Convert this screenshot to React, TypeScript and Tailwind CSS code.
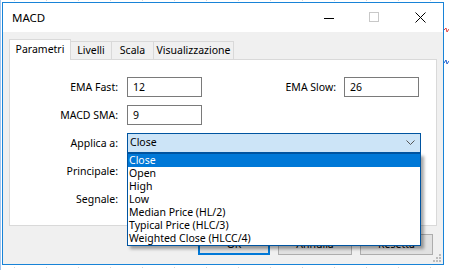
import React from "react";

const font = { fontFamily: '"Noto Sans", "Open Sans", sans-serif' };

const tabs = [
  { name: "Parametri", w: "w-[62px]", active: true },
  { name: "Livelli", w: "w-[41px]", active: false },
  { name: "Scala", w: "w-[42px]", active: false },
  { name: "Visualizzazione", w: "w-[80px]", active: false },
];

const options = [
  "Close",
  "Open",
  "High",
  "Low",
  "Median Price (HL/2)",
  "Typical Price (HLC/3)",
  "Weighted Close (HLCC/4)",
];

const Label = ({ text }: { text: string }) => (
  <div className="w-[108px] shrink-0 pr-[1px] text-right leading-[20px]">{text}</div>
);

const Input = ({ value }: { value: string }) => (
  <div className="ml-[8px] h-[20px] w-[75px] border border-[#7a7a7a] bg-white pl-[5px] leading-[18px]">
    {value}
  </div>
);

const ChartBg = () => (
  <svg className="absolute inset-0" width="449" height="270">
    {[14, 46, 78, 110, 142, 174, 206, 238, 270, 302, 334, 366, 398, 430].map((x) => (
      <line key={x} x1={x + 0.5} y1="0" x2={x + 0.5} y2="270" stroke="#d8d8d8" strokeDasharray="1 2" />
    ))}
    <polyline points="444,30 446,28 447,32 449,29" fill="none" stroke="#e04040" />
    <polyline points="444,63 446,60 447,64 449,61" fill="none" stroke="#2060d0" />
    <line x1="0.5" y1="0" x2="0.5" y2="270" stroke="#4a90e2" strokeOpacity="0.5" />
  </svg>
);

export default function App() {
  return (
    <div className="relative h-[270px] w-[449px] overflow-hidden bg-white text-[10.5px] text-black" style={font}>
      <ChartBg />
      <div className="relative ml-[2px] mt-[2px] flex h-[263px] w-[442px] flex-col border border-[#1883d7] bg-[#f0f0f0]">
        {/* title bar */}
        <div className="flex h-[29px] shrink-0 items-center bg-white">
          <div className="pl-[9px] text-[11.5px]">MACD</div>
          <div className="flex-1" />
          <svg width="10" height="10" className="mr-[35px]">
            <line x1="0" y1="5.5" x2="10" y2="5.5" stroke="#000" />
          </svg>
          <svg width="11" height="11" className="mr-[35px]">
            <rect x="0.5" y="0.5" width="9" height="9" fill="none" stroke="#c8c8c8" />
          </svg>
          <svg width="11" height="11" className="mr-[17px]">
            <path d="M0.5 0.5 L10.5 10.5 M10.5 0.5 L0.5 10.5" stroke="#000" />
          </svg>
        </div>

        {/* body */}
        <div className="flex flex-1 flex-col pl-[6px] pr-[6px] pt-[7px]">
          <div className="flex h-[20px] items-end">
            {tabs.map((t) =>
              t.active ? (
                <div
                  key={t.name}
                  className={`relative z-10 -mb-px flex h-[21px] ${t.w} items-center justify-center border border-b-0 border-[#d9d9d9] bg-white pb-[1px]`}
                >
                  {t.name}
                </div>
              ) : (
                <div
                  key={t.name}
                  className={`flex h-[18px] ${t.w} items-center justify-center border border-b-0 border-l-0 border-[#d9d9d9] bg-[#f0f0f0]`}
                >
                  {t.name}
                </div>
              )
            )}
          </div>

          <div className="flex h-[167px] flex-col gap-[8px] border border-[#d9d9d9] bg-white pl-[1px] pt-[17px]">
            <div className="flex h-[20px] items-center">
              <Label text="EMA Fast:" />
              <Input value="12" />
              <div className="flex-1" />
              <div className="leading-[20px]">EMA Slow:</div>
              <Input value="26" />
              <div className="w-[17px]" />
            </div>
            <div className="flex h-[20px] items-center">
              <Label text="MACD SMA:" />
              <Input value="9" />
            </div>
            <div className="flex h-[20px] items-center">
              <Label text="Applica a:" />
              <div className="relative ml-[8px] h-[20px] w-[294px]">
                <div className="flex h-[20px] items-center border border-[#0054a0] bg-[#cce4f7] pl-[2px]">
                  <span className="flex-1">Close</span>
                  <svg width="10" height="6" className="mr-[4px]">
                    <polyline points="0.5,0.5 4.5,4.5 8.5,0.5" fill="none" stroke="#555" />
                  </svg>
                </div>
                <div className="absolute left-0 top-[20px] z-20 w-[294px] border border-[#0054a0] bg-white shadow-[3px_3px_3px_rgba(0,0,0,0.35)]">
                  {options.map((o, i) => (
                    <div
                      key={o}
                      className={`h-[13px] pl-[1px] leading-[13px] ${i === 0 ? "bg-[#0078d7] text-white" : ""}`}
                    >
                      {o}
                    </div>
                  ))}
                </div>
              </div>
            </div>
            <div className="flex h-[20px] items-center">
              <Label text="Principale:" />
            </div>
            <div className="flex h-[20px] items-center">
              <Label text="Segnale:" />
            </div>
          </div>

          <div className="mt-[8px] flex justify-end gap-[8px] pr-[4px]">
            <div className="flex h-[21px] w-[72px] items-center justify-center border-2 border-[#0078d7] bg-[#e1e1e1]">
              OK
            </div>
            <div className="flex h-[21px] w-[74px] items-center justify-center border border-[#adadad] bg-[#e1e1e1]">
              Annulla
            </div>
            <div className="flex h-[21px] w-[73px] items-center justify-center border border-[#adadad] bg-[#e1e1e1]">
              Resetta
            </div>
          </div>
        </div>

        <svg width="8" height="8" className="absolute bottom-[2px] right-[2px]">
          {[
            [6, 0],
            [3, 3],
            [6, 3],
            [0, 6],
            [3, 6],
            [6, 6],
          ].map(([x, y]) => (
            <rect key={`${x}-${y}`} x={x} y={y} width="2" height="2" fill="#bcbcbc" />
          ))}
        </svg>
      </div>
    </div>
  );
}
